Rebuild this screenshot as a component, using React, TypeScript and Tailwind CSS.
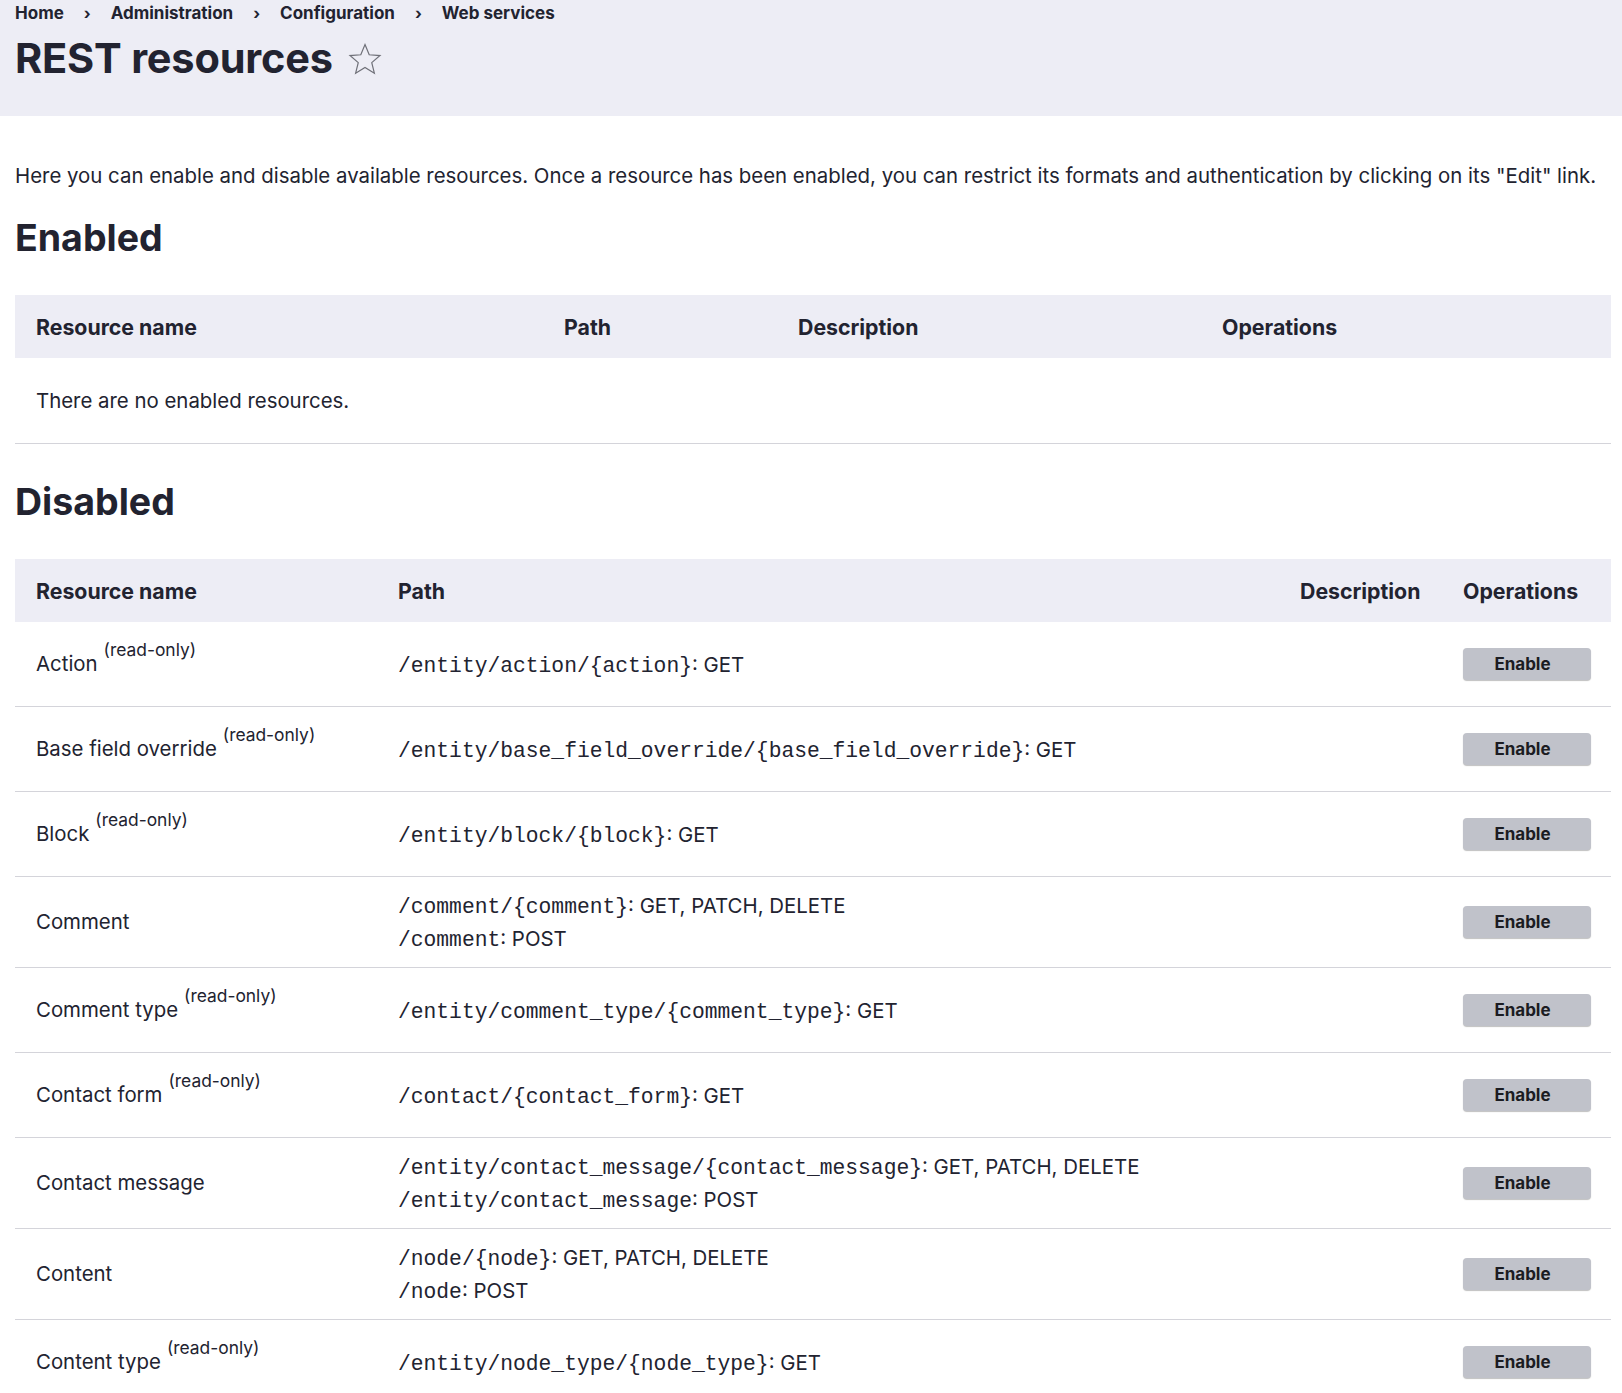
import React from "react";

type Row = { name: string; ro: boolean; paths: { p: string; m: string }[] };

const rows: Row[] = [
  { name: "Action", ro: true, paths: [{ p: "/entity/action/{action}", m: "GET" }] },
  { name: "Base field override", ro: true, paths: [{ p: "/entity/base_field_override/{base_field_override}", m: "GET" }] },
  { name: "Block", ro: true, paths: [{ p: "/entity/block/{block}", m: "GET" }] },
  {
    name: "Comment",
    ro: false,
    paths: [
      { p: "/comment/{comment}", m: "GET, PATCH, DELETE" },
      { p: "/comment", m: "POST" },
    ],
  },
  { name: "Comment type", ro: true, paths: [{ p: "/entity/comment_type/{comment_type}", m: "GET" }] },
  { name: "Contact form", ro: true, paths: [{ p: "/contact/{contact_form}", m: "GET" }] },
  {
    name: "Contact message",
    ro: false,
    paths: [
      { p: "/entity/contact_message/{contact_message}", m: "GET, PATCH, DELETE" },
      { p: "/entity/contact_message", m: "POST" },
    ],
  },
  {
    name: "Content",
    ro: false,
    paths: [
      { p: "/node/{node}", m: "GET, PATCH, DELETE" },
      { p: "/node", m: "POST" },
    ],
  },
  { name: "Content type", ro: true, paths: [{ p: "/entity/node_type/{node_type}", m: "GET" }] },
];

function Star() {
  return (
    <svg width="36" height="36" viewBox="0 0 24 24" className="ml-[14px] mt-[1px]">
      <path
        d="M12 2.4l2.8 6.75 7.2.55-5.5 4.7 1.75 7.05L12 17.6l-6.25 3.85 1.75-7.05-5.5-4.7 7.2-.55z"
        fill="none"
        stroke="#6f7078"
        strokeWidth="0.8"
        strokeLinejoin="miter"
      />
    </svg>
  );
}

function Sep() {
  return <span className="mx-[20px] text-[16px] font-bold text-[#222330]">›</span>;
}

export default function App() {
  return (
    <div className="min-h-screen bg-white text-[#222330]" style={{ fontFamily: "Inter, 'Noto Sans', sans-serif" }}>
      <div className="h-[116px] bg-[#ededf5] pl-[15px]">
        <div className="pt-[3px] h-[23px] leading-[20px] text-[17px] font-bold flex items-center">
          <span>Home</span>
          <Sep />
          <span>Administration</span>
          <Sep />
          <span>Configuration</span>
          <Sep />
          <span>Web services</span>
        </div>
        <div className="mt-[11px] flex items-center h-[48px]">
          <h1 className="text-[41.5px] leading-[48px] font-bold tracking-[-0.2px]">REST resources</h1>
          <Star />
        </div>
      </div>

      <div className="pl-[15px] pr-[11px]">
        <p className="mt-[45px] text-[20.4px] leading-[30px]">
          Here you can enable and disable available resources. Once a resource has been enabled, you can restrict its formats and authentication by clicking on its "Edit" link.
        </p>

        <h2 className="mt-[25px] text-[37.5px] leading-[44px] font-bold">Enabled</h2>

        <table className="mt-[35px] w-full table-fixed border-collapse text-[20.4px] leading-[30px]">
          <colgroup>
            <col className="w-[528px]" />
            <col className="w-[234px]" />
            <col className="w-[424px]" />
            <col />
          </colgroup>
          <thead>
            <tr className="bg-[#ededf5] h-[63px] text-left text-[21.3px]">
              <th className="px-[21px] font-bold">Resource name</th>
              <th className="px-[21px] font-bold">Path</th>
              <th className="px-[21px] font-bold">Description</th>
              <th className="px-[21px] font-bold">Operations</th>
            </tr>
          </thead>
          <tbody>
            <tr className="border-b border-[#d4d4da]">
              <td colSpan={4} className="px-[21px] py-[27.5px]">
                There are no enabled resources.
              </td>
            </tr>
          </tbody>
        </table>

        <h2 className="mt-[36px] text-[37.5px] leading-[44px] font-bold">Disabled</h2>

        <table className="mt-[35px] w-full table-fixed border-collapse text-[20.4px] leading-[30px]">
          <colgroup>
            <col className="w-[362px]" />
            <col className="w-[902px]" />
            <col className="w-[163px]" />
            <col />
          </colgroup>
          <thead>
            <tr className="bg-[#ededf5] h-[63px] text-left text-[21.3px]">
              <th className="px-[21px] font-bold">Resource name</th>
              <th className="px-[21px] font-bold">Path</th>
              <th className="px-[21px] font-bold">Description</th>
              <th className="px-[21px] font-bold">Operations</th>
            </tr>
          </thead>
          <tbody>
            {rows.map((r) => (
              <tr key={r.name} className="border-b border-[#d4d4da]">
                <td className="px-[21px] py-[12px] align-middle">
                  <span>{r.name}</span>
                  {r.ro && (
                    <span className="relative -top-[15px] ml-[6px] text-[17.4px] leading-[20px]">(read-only)</span>
                  )}
                </td>
                <td className="px-[21px] py-[12px] align-middle">
                  {r.paths.map((p) => (
                    <div key={p.p} className="h-[33px] leading-[33px] whitespace-nowrap">
                      <span className="text-[21.3px] leading-none" style={{ fontFamily: "'Liberation Mono', monospace" }}>
                        {p.p}
                      </span>
                      <span>: {p.m}</span>
                    </div>
                  ))}
                </td>
                <td className="px-[21px] py-[12px]"></td>
                <td className="px-[21px] py-[12px] align-middle">
                  <button className="my-[14px] block h-[32px] w-[128px] rounded-[4px] bg-[#c0c2ca] pr-[9px] text-[17px] font-bold leading-[32px] text-[#1b1c22] shadow-[0_1px_1px_rgba(0,0,0,0.25)]">
                    Enable
                  </button>
                </td>
              </tr>
            ))}
          </tbody>
        </table>
      </div>
    </div>
  );
}
